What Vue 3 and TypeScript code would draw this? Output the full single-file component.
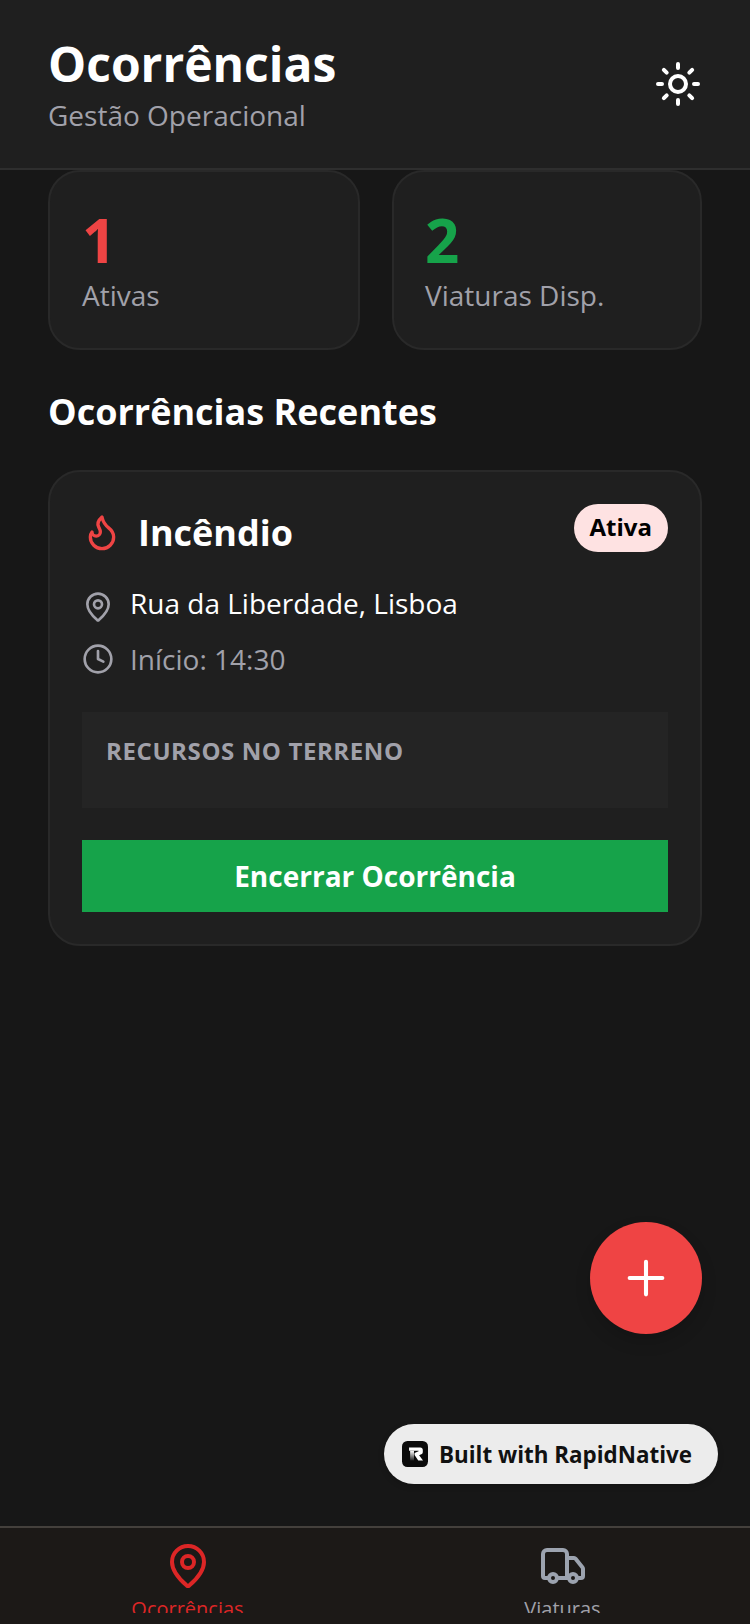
<script setup lang="ts">
const stats = [
  { value: 1, label: 'Ativas', tone: 'red' },
  { value: 2, label: 'Viaturas Disp.', tone: 'green' },
]
</script>

<template>
  <div class="screen">
    <header class="header">
      <div>
        <h1 class="title">Ocorrências</h1>
        <p class="subtitle">Gestão Operacional</p>
      </div>
      <svg class="sun" viewBox="0 0 24 24" fill="none" stroke="#fff" stroke-width="2" stroke-linecap="round">
        <circle cx="12" cy="12" r="4" />
        <path d="M12 2v2M12 20v2M4.93 4.93l1.41 1.41M17.66 17.66l1.41 1.41M2 12h2M20 12h2M6.34 17.66l-1.41 1.41M19.07 4.93l-1.41 1.41" />
      </svg>
    </header>

    <main class="content">
      <div class="stats">
        <div v-for="s in stats" :key="s.label" class="stat">
          <div class="stat-value" :class="s.tone">{{ s.value }}</div>
          <div class="stat-label">{{ s.label }}</div>
        </div>
      </div>

      <h2 class="section">Ocorrências Recentes</h2>

      <section class="card">
        <div class="card-top">
          <div class="card-name">
            <svg class="flame" viewBox="0 0 24 24" fill="none" stroke="#ef4444" stroke-width="2" stroke-linecap="round" stroke-linejoin="round">
              <path d="M8.5 14.5A2.5 2.5 0 0 0 11 12c0-1.38-.5-2-1-3-1.07-2.14-.22-4.05 2-6 .5 2.5 2 4.9 4 6.5 2 1.6 3 3.5 3 5.5a7 7 0 1 1-14 0c0-1.15.43-2.29 1-3a2.5 2.5 0 0 0 2.5 2.5z" />
            </svg>
            <span class="card-title">Incêndio</span>
          </div>
          <span class="pill">Ativa</span>
        </div>

        <div class="row row-place">
          <svg class="row-icon pin" viewBox="0 0 24 24" fill="none" stroke="#a1a1aa" stroke-width="2" stroke-linecap="round" stroke-linejoin="round">
            <path d="M20 10c0 4.99-5.54 10.19-7.4 11.8a1 1 0 0 1-1.2 0C9.54 20.19 4 14.99 4 10a8 8 0 0 1 16 0" />
            <circle cx="12" cy="10" r="3" />
          </svg>
          <span>Rua da Liberdade, Lisboa</span>
        </div>
        <div class="row row-time">
          <svg class="row-icon" viewBox="0 0 24 24" fill="none" stroke="#a1a1aa" stroke-width="2" stroke-linecap="round" stroke-linejoin="round">
            <circle cx="12" cy="12" r="10" />
            <path d="M12 6v6l4 2" />
          </svg>
          <span>Início: 14:30</span>
        </div>

        <div class="resources">RECURSOS NO TERRENO</div>
        <button class="close-btn">Encerrar Ocorrência</button>
      </section>
    </main>

    <button class="fab" aria-label="Nova ocorrência">
      <svg viewBox="0 0 24 24" fill="none" stroke="#fff" stroke-width="1.75" stroke-linecap="round">
        <path d="M5 12h14M12 5v14" />
      </svg>
    </button>

    <div class="built">
      <span class="logo">
        <svg viewBox="0 0 24 24">
          <defs>
            <linearGradient id="stem" x1="0" y1="0" x2="0" y2="1">
              <stop offset="0" stop-color="#fff" />
              <stop offset="1" stop-color="#222" />
            </linearGradient>
          </defs>
          <rect width="24" height="24" rx="5" fill="#0b0b0b" />
          <path d="M6.5 6h10.4c1.5 0 2.3 1 2.3 2.3v1.9c0 1-.5 1.7-1.4 2.1l-2 .9 3.6 4.8h-4.4L11.6 13v-2l3.7-1.5v-.4H6.5z" fill="#fff" />
          <path d="M7.5 9.1h3.6V18H7.5z" fill="url(#stem)" />
        </svg>
      </span>
      <span>Built with RapidNative</span>
    </div>

    <nav class="tabs">
      <div class="tab active">
        <svg viewBox="0 0 24 24" fill="none" stroke="#dc2626" stroke-width="2" stroke-linecap="round" stroke-linejoin="round">
          <path d="M20 10c0 4.99-5.54 10.19-7.4 11.8a1 1 0 0 1-1.2 0C9.54 20.19 4 14.99 4 10a8 8 0 0 1 16 0" />
          <circle cx="12" cy="10" r="3" />
        </svg>
        <span class="tab-label">Ocorrências</span>
      </div>
      <div class="tab">
        <svg viewBox="0 0 24 24" fill="none" stroke="#9ca3af" stroke-width="2" stroke-linecap="round" stroke-linejoin="round">
          <path d="M14 18V6a2 2 0 0 0-2-2H4a2 2 0 0 0-2 2v11a1 1 0 0 0 1 1h2" />
          <path d="M15 18H9" />
          <path d="M19 18h2a1 1 0 0 0 1-1v-3.65a1 1 0 0 0-.22-.624l-3.48-4.35A1 1 0 0 0 17.52 8H14" />
          <circle cx="17" cy="18" r="2" />
          <circle cx="7" cy="18" r="2" />
        </svg>
        <span class="tab-label">Viaturas</span>
      </div>
    </nav>
  </div>
</template>

<style>
html,
body {
  margin: 0;
  background: #171717;
}
</style>

<style scoped>
.screen {
  position: relative;
  width: 750px;
  height: 1624px;
  overflow: hidden;
  display: flex;
  flex-direction: column;
  background: #171717;
  color: #fff;
  font-family: 'Open Sans', sans-serif;
}

.header {
  flex: none;
  height: 170px;
  box-sizing: border-box;
  padding: 33px 48px 0;
  display: flex;
  justify-content: space-between;
  background: #1f1f1f;
  border-bottom: 2px solid #2e2e2e;
}

.title {
  margin: 0;
  font-size: 48px;
  line-height: 62px;
  font-weight: 700;
}

.subtitle {
  margin: 0;
  font-size: 28px;
  line-height: 40px;
  color: #a1a1aa;
}

.sun {
  width: 48px;
  height: 48px;
  margin: 27px 0 0;
}

.content {
  flex: 1;
  padding: 0 48px;
}

.stats {
  display: grid;
  grid-template-columns: 312px 310px;
  gap: 32px;
}

.stat {
  height: 180px;
  box-sizing: border-box;
  padding: 32px;
  background: #1f1f1f;
  border: 2px solid #292929;
  border-radius: 32px;
}

.stat:last-child {
  padding-left: 31px;
}

.stat-value {
  margin-top: 2px;
  font-size: 60px;
  line-height: 69px;
  font-weight: 700;
}

.red {
  color: #ef4444;
}

.green {
  color: #16a34a;
}

.stat-label {
  font-size: 28px;
  line-height: 40px;
  color: #a1a1aa;
}

.section {
  margin: 38px 0 34px;
  font-size: 36px;
  line-height: 48px;
  font-weight: 700;
}

.card {
  box-sizing: border-box;
  padding: 32px;
  background: #1f1f1f;
  border: 2px solid #292929;
  border-radius: 32px;
}

.card-top {
  display: flex;
  justify-content: space-between;
  align-items: flex-start;
}

.card-name {
  display: flex;
  align-items: center;
  gap: 16px;
  height: 56px;
  font-size: 36px;
  line-height: 56px;
  font-weight: 700;
}

.card-title {
  padding-top: 2px;
}

.flame {
  width: 40px;
  height: 40px;
}

.pill {
  padding: 0 16px;
  height: 48px;
  line-height: 46px;
  border-radius: 24px;
  background: #fee2e2;
  color: #000;
  font-size: 24px;
  font-weight: 700;
}

.row {
  display: flex;
  align-items: center;
  gap: 16px;
  font-size: 28px;
  line-height: 40px;
}

.row-place {
  margin-top: 23px;
}

.row-time {
  margin-top: 16px;
  color: #a1a1aa;
}

.row-icon {
  width: 32px;
  height: 32px;
}

.pin {
  margin-top: 8px;
}

.resources {
  margin-top: 33px;
  height: 96px;
  box-sizing: border-box;
  padding: 25px 24px 0;
  background: #242424;
  color: #a1a1aa;
  font-size: 24px;
  line-height: 28px;
  font-weight: 700;
  letter-spacing: 0.6px;
}

.close-btn {
  display: block;
  width: 100%;
  height: 72px;
  margin-top: 32px;
  border: 0;
  background: #16a34a;
  color: #fff;
  font-family: inherit;
  font-size: 28px;
  font-weight: 700;
}

.fab {
  position: absolute;
  left: 590px;
  top: 1222px;
  width: 112px;
  height: 112px;
  padding: 0;
  border: 0;
  border-radius: 50%;
  background: #ef4444;
  display: flex;
  align-items: center;
  justify-content: center;
  box-shadow: 0 8px 16px rgba(0, 0, 0, 0.15);
}

.fab svg {
  width: 56px;
  height: 56px;
}

.built {
  position: absolute;
  left: 384px;
  top: 1424px;
  width: 334px;
  height: 60px;
  box-sizing: border-box;
  padding-left: 18px;
  display: flex;
  align-items: center;
  gap: 11px;
  border-radius: 30px;
  background: #ececec;
  color: #111;
  font-size: 22.4px;
  font-weight: 700;
  box-shadow: 0 2px 6px rgba(0, 0, 0, 0.2);
}

.logo,
.logo svg {
  width: 26px;
  height: 26px;
  display: block;
}

.tabs {
  flex: none;
  height: 98px;
  box-sizing: border-box;
  display: flex;
  background: #1c1917;
  border-top: 2px solid #44403c;
}

.tab {
  flex: 1;
  display: flex;
  flex-direction: column;
  align-items: center;
  padding-top: 14px;
  color: #a1a1aa;
}

.tab svg {
  width: 48px;
  height: 48px;
}

.tab.active {
  color: #dc2626;
}

.tab-label {
  height: 19px;
  overflow: hidden;
  margin-top: 4px;
  font-size: 20px;
  line-height: 29px;
}
</style>
